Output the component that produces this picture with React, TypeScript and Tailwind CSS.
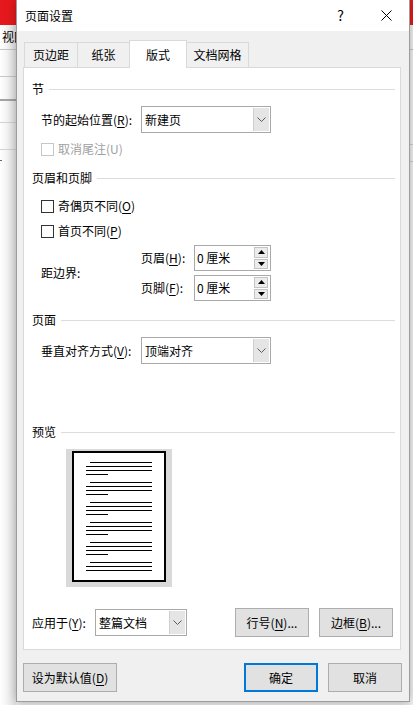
import React from 'react';

const Key: React.FC<{ k: string; plain?: boolean }> = ({ k, plain }) => (
  <>
    (<span className={plain ? '' : 'underline underline-offset-[2px]'}>{k}</span>)
  </>
);

const SectionTitle: React.FC<{ title: string; className?: string }> = ({ title, className }) => (
  <div className={`flex h-[16px] items-center ${className || ''}`}>
    <span className="leading-[16px]">{title}</span>
    <div className="ml-[5px] h-px flex-1 bg-[#dcdcdc]" />
  </div>
);

const Chevron = () => (
  <svg width="9" height="5" viewBox="0 0 9 5">
    <path d="M0.5 0.5 L4.5 4.5 L8.5 0.5" fill="none" stroke="#5a5a5a" strokeWidth="1" />
  </svg>
);

const Combo: React.FC<{ value: string; w: string }> = ({ value, w }) => (
  <div className={`flex h-[27px] border border-[#a9a9a9] bg-white ${w}`}>
    <div className="flex flex-1 items-center pl-[3px]">{value}</div>
    <div className="m-px ml-0 flex w-[16px] items-center justify-center border-l border-[#cfcfcf] bg-[#e5e5e5]">
      <Chevron />
    </div>
  </div>
);

const SpinArrow: React.FC<{ up?: boolean }> = ({ up }) => (
  <svg width="7" height="4" viewBox="0 0 7 4">
    {up ? <path d="M0 4 L3.5 0 L7 4 Z" fill="#000" /> : <path d="M0 0 L3.5 4 L7 0 Z" fill="#000" />}
  </svg>
);

const Spin: React.FC<{ value: string }> = ({ value }) => (
  <div className="flex h-[26px] w-[77px] border border-[#a9a9a9] bg-white">
    <div className="flex flex-1 items-center pl-[2px]">{value}</div>
    <div className="flex w-[16px] flex-col gap-px py-px pr-[2px]">
      <div className="flex flex-1 items-center justify-center border border-[#c4c4c4] bg-[#ececec]">
        <SpinArrow up />
      </div>
      <div className="flex flex-1 items-center justify-center border border-[#c4c4c4] bg-[#ececec]">
        <SpinArrow />
      </div>
    </div>
  </div>
);

const Check: React.FC<{ label: React.ReactNode; disabled?: boolean; className?: string }> = ({ label, disabled, className }) => (
  <div className={`ml-[9px] flex h-[16px] items-center ${className || ''}`}>
    <div className={`h-[13px] w-[13px] border bg-white ${disabled ? 'border-[#c6c6c6]' : 'border-[#333333]'}`} />
    <span className={`ml-[4px] leading-[16px] ${disabled ? 'text-[#a0a0a0]' : ''}`}>{label}</span>
  </div>
);

const Button: React.FC<{ children: React.ReactNode; w: string; primary?: boolean; className?: string }> = ({ children, w, primary, className }) => (
  <div
    className={`flex h-[29px] items-center justify-center bg-[#e1e1e1] ${w} ${
      primary ? 'border-2 border-[#0078d7]' : 'border border-[#adadad]'
    } ${className || ''}`}
  >
    {children}
  </div>
);

const Tab: React.FC<{ children: React.ReactNode; w: string; className?: string }> = ({ children, w, className }) => (
  <div className={`flex h-[25px] items-center justify-center border border-b-0 border-[#d9d9d9] bg-[#f0f0f0] ${w} ${className || ''}`}>
    {children}
  </div>
);

const Preview = () => {
  const groups = [13, 33, 53, 73, 93, 113];
  return (
    <svg width="106" height="138" viewBox="0 0 106 138" className="ml-[34px] mt-[9px] block">
      <rect width="106" height="138" fill="#d9d9d9" />
      <rect x="7" y="3" width="92" height="129" fill="#fff" stroke="#000" strokeWidth="2" />
      {groups.map((g, i) => (
        <g key={g} stroke="#000" strokeWidth="1">
          <line x1="24" y1={g + 0.5} x2="86" y2={g + 0.5} />
          <line x1="20" y1={g + 4.5} x2="86" y2={g + 4.5} />
          <line x1="20" y1={g + 8.5} x2="86" y2={g + 8.5} />
          {i < groups.length - 1 && <line x1="20" y1={g + 12.5} x2="42" y2={g + 12.5} />}
        </g>
      ))}
    </svg>
  );
};

const App: React.FC = () => {
  return (
    <div className="flex h-[705px] w-[413px] overflow-hidden bg-[#ececec] font-['Noto_Sans_CJK_SC',sans-serif] text-[12px] text-black">
      {/* word window behind, left edge */}
      <div className="flex w-[16px] shrink-0 flex-col overflow-hidden bg-gradient-to-r from-white to-[#e4e4e4]">
        <div className="h-[25px] shrink-0 bg-[#e5191d]" />
        <div className="flex h-[24px] shrink-0 items-center whitespace-nowrap pl-[2px]">视图</div>
        <div className="h-px shrink-0 bg-[#c6c6c6]" />
        <div className="h-[26px] shrink-0" />
        <div className="h-px shrink-0 bg-[#c6c6c6]" />
        <div className="h-[22px] shrink-0" />
        <div className="h-[2px] shrink-0 bg-[#a3a3a3]" />
        <div className="h-[21px] shrink-0" />
        <div className="h-px shrink-0 bg-[#d2d2d2]" />
        <div className="h-[26px] shrink-0" />
        <div className="h-px shrink-0 bg-[#d2d2d2]" />
        <div className="mt-[10px] h-px w-[2px] shrink-0 bg-[#666666]" />
      </div>

      {/* dialog */}
      <div className="relative z-10 flex h-[702px] w-[394px] shrink-0 flex-col border-x border-b border-[#9c9c9c] bg-[#f0f0f0] shadow-[0_0_10px_rgba(0,0,0,0.3)]">
        <div className="flex h-[31px] shrink-0 items-center bg-white">
          <span className="pl-[8px] leading-[16px]">页面设置</span>
          <div className="ml-auto flex h-full w-[45px] items-center justify-center text-[14px]">?</div>
          <div className="flex h-full w-[46px] items-center justify-center">
            <svg width="11" height="11" viewBox="0 0 11 11">
              <path d="M0.5 0.5 L10.5 10.5 M10.5 0.5 L0.5 10.5" stroke="#000" strokeWidth="1" />
            </svg>
          </div>
        </div>

        <div className="ml-[7px] mt-[9px] flex h-[27px] shrink-0 items-end">
          <Tab w="w-[54px]">页边距</Tab>
          <Tab w="w-[53px]" className="-ml-px">纸张</Tab>
          <div className="relative z-10 -mb-px -ml-px flex h-[28px] w-[58px] items-center justify-center border border-b-0 border-[#d9d9d9] bg-white">
            版式
          </div>
          <Tab w="w-[63px]" className="-ml-px">文档网格</Tab>
        </div>

        <div className="ml-[6px] flex h-[583px] w-[378px] shrink-0 flex-col border border-[#d9d9d9] bg-white pl-[8px] pr-[5px]">
          <SectionTitle title="节" className="mt-[13px]" />
          <div className="mt-[9px] flex h-[27px] items-center">
            <span className="ml-[9px] w-[100px]">
              节的起始位置<Key k="R" />:
            </span>
            <Combo value="新建页" w="w-[130px]" />
          </div>
          <Check className="mt-[8px]" disabled label={<>取消尾注<Key k="U" plain /></>} />

          <SectionTitle title="页眉和页脚" className="mt-[13px]" />
          <Check className="mt-[12px]" label={<>奇偶页不同<Key k="O" /></>} />
          <Check className="mt-[9px]" label={<>首页不同<Key k="P" /></>} />
          <div className="mt-[6px] flex items-center">
            <span className="ml-[9px] w-[100px]">距边界:</span>
            <div className="flex flex-col gap-[4px]">
              <div className="flex items-center">
                <span className="w-[53px]">
                  页眉<Key k="H" />:
                </span>
                <Spin value="0 厘米" />
              </div>
              <div className="flex items-center">
                <span className="w-[53px]">
                  页脚<Key k="F" />:
                </span>
                <Spin value="0 厘米" />
              </div>
            </div>
          </div>

          <SectionTitle title="页面" className="mt-[11px]" />
          <div className="mt-[9px] flex h-[27px] items-center">
            <span className="ml-[9px] w-[100px]">
              垂直对齐方式<Key k="V" />:
            </span>
            <Combo value="顶端对齐" w="w-[130px]" />
          </div>

          <SectionTitle title="预览" className="mt-[60px]" />
          <Preview />

          <div className="mb-[12px] mt-auto flex h-[29px] items-center">
            <span className="w-[63px]">
              应用于<Key k="Y" />:
            </span>
            <Combo value="整篇文档" w="w-[92px]" />
            <Button w="w-[74px]" className="ml-[48px]">
              <span>
                行号<Key k="N" />...
              </span>
            </Button>
            <Button w="w-[74px]" className="ml-[10px]">
              <span>
                边框<Key k="B" />...
              </span>
            </Button>
          </div>
        </div>

        <div className="mt-[13px] flex shrink-0 items-center pl-[6px] pr-[7px]">
          <Button w="w-[94px]">
            <span>
              设为默认值<Key k="D" />
            </span>
          </Button>
          <Button w="w-[74px]" primary className="ml-auto">
            确定
          </Button>
          <Button w="w-[74px]" className="ml-[10px]">
            取消
          </Button>
        </div>
      </div>

      {/* word window behind, right edge */}
      <div className="flex flex-1 flex-col bg-[#f3f3f3]">
        <div className="h-[25px] shrink-0 bg-[#e5191d]" />
        <div className="mt-[24px] h-px shrink-0 bg-[#c6c6c6]" />
        <div className="mt-[94px] h-px shrink-0 bg-[#cfcfcf]" />
        <div className="mt-[16px] h-px shrink-0 bg-[#cfcfcf]" />
      </div>
    </div>
  );
};

export default App;
